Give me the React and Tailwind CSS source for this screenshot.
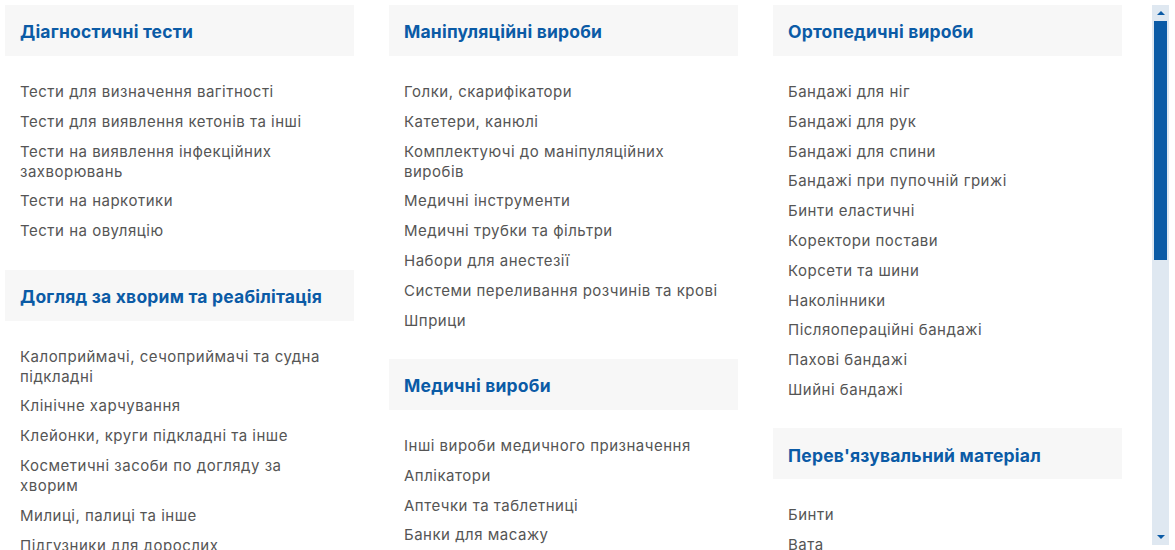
import React from "react";

const columns = [
  [
    {
      title: "Діагностичні тести",
      items: [
        "Тести для визначення вагітності",
        "Тести для виявлення кетонів та інші",
        "Тести на виявлення інфекційних захворювань",
        "Тести на наркотики",
        "Тести на овуляцію",
      ],
    },
    {
      title: "Догляд за хворим та реабілітація",
      items: [
        "Калоприймачі, сечоприймачі та судна підкладні",
        "Клінічне харчування",
        "Клейонки, круги підкладні та інше",
        "Косметичні засоби по догляду за хворим",
        "Милиці, палиці та інше",
        "Підгузники для дорослих",
      ],
    },
  ],
  [
    {
      title: "Маніпуляційні вироби",
      items: [
        "Голки, скарифікатори",
        "Катетери, канюлі",
        "Комплектуючі до маніпуляційних виробів",
        "Медичні інструменти",
        "Медичні трубки та фільтри",
        "Набори для анестезії",
        "Системи переливання розчинів та крові",
        "Шприци",
      ],
    },
    {
      title: "Медичні вироби",
      items: [
        "Інші вироби медичного призначення",
        "Аплікатори",
        "Аптечки та таблетниці",
        "Банки для масажу",
        "Грілки",
      ],
    },
  ],
  [
    {
      title: "Ортопедичні вироби",
      items: [
        "Бандажі для ніг",
        "Бандажі для рук",
        "Бандажі для спини",
        "Бандажі при пупочній грижі",
        "Бинти еластичні",
        "Коректори постави",
        "Корсети та шини",
        "Наколінники",
        "Післяопераційні бандажі",
        "Пахові бандажі",
        "Шийні бандажі",
      ],
    },
    {
      title: "Перев'язувальний матеріал",
      items: ["Бинти", "Вата", "Лейкопластирі"],
    },
  ],
];

function Group({ title, items }) {
  return (
    <div className="mb-[28.5px]">
      <div className="bg-[#f7f7f7] h-[51px] flex items-center px-[15px] pt-[3px]">
        <h3 className="text-[17.5px] font-bold text-[#0b5ba6] leading-none tracking-[0.2px]">{title}</h3>
      </div>
      <ul className="pt-[26px] pl-[15px] pr-[16px] flex flex-col gap-[9.8px]">
        {items.map((it) => (
          <li key={it} className="text-[15px] leading-[20px] text-[#555555] tracking-[0.5px]">
            {it}
          </li>
        ))}
      </ul>
    </div>
  );
}

export default function App() {
  return (
    <div
      className="h-[550px] w-[1175px] overflow-hidden bg-white flex"
      style={{ fontFamily: 'Inter, "Noto Sans", sans-serif' }}
    >
      <div className="w-[1152px] pl-[5px] pt-[5px] grid grid-cols-[349px_349px_349px] gap-x-[35px] content-start">
        {columns.map((col, i) => (
          <div key={i}>
            {col.map((g) => (
              <Group key={g.title} {...g} />
            ))}
          </div>
        ))}
      </div>
      <div className="mt-[5px] h-[540px] w-[17px] bg-[#dfe8f1] flex flex-col items-center">
        <div className="h-[16px] flex items-center justify-center">
          <div className="w-0 h-0 border-l-[4px] border-r-[4px] border-b-[4px] border-l-transparent border-r-transparent border-b-[#0b5ba6]" />
        </div>
        <div className="w-[13px] h-[239px] bg-[#0b5ba6]" />
        <div className="flex-1" />
        <div className="h-[16px] flex items-center justify-center">
          <div className="w-0 h-0 border-l-[4px] border-r-[4px] border-t-[4px] border-l-transparent border-r-transparent border-t-[#0b5ba6]" />
        </div>
      </div>
    </div>
  );
}
